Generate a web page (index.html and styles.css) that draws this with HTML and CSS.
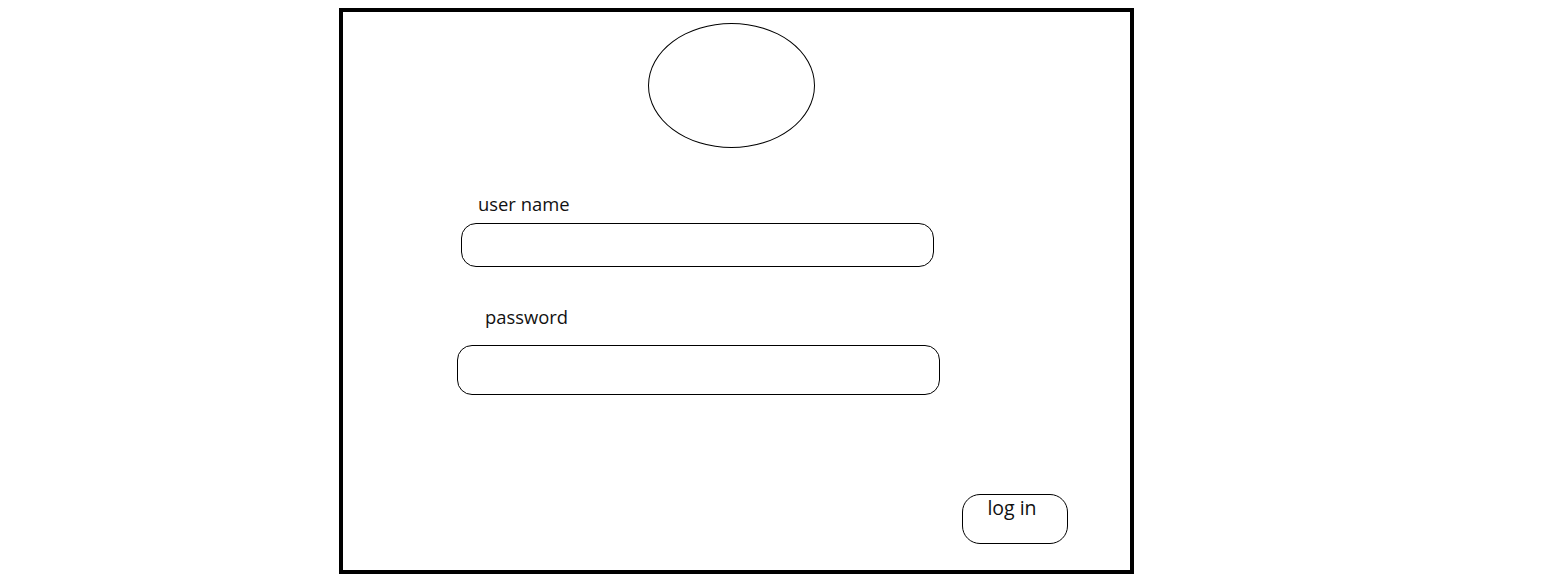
FILE: index.html
```html
<!DOCTYPE html>
<html>
<head>
<meta charset="utf-8">
<link rel="stylesheet" href="styles.css">
</head>
<body>
<div class="page">
  <div class="frame">
    <div class="logo"></div>
    <label class="label label-user">user name</label>
    <div class="field field-user"></div>
    <label class="label label-pass">password</label>
    <div class="field field-pass"></div>
    <div class="login">log in</div>
  </div>
</div>
</body>
</html>
```
FILE: styles.css
```css
html, body {
  margin: 0;
  background: #fff;
  font-family: "Open Sans", "Noto Sans", sans-serif;
  color: #111;
}
.page {
  padding: 8px 0 0 339px;
}
.frame {
  box-sizing: border-box;
  width: 795px;
  height: 566px;
  border: 4px solid #000;
  display: flex;
  flex-direction: column;
  align-items: flex-start;
}
.logo {
  box-sizing: border-box;
  width: 167px;
  height: 125px;
  margin: 11px 0 0 305px;
  border: 1px solid #000;
  border-radius: 50%;
}
.label {
  display: block;
  font-size: 18.4px;
  line-height: 24px;
}
.label-user {
  margin: 44px 0 0 135px;
}
.field {
  box-sizing: border-box;
  border: 1px solid #000;
  border-radius: 15px;
}
.field-user {
  width: 473px;
  height: 44px;
  margin: 7px 0 0 118px;
}
.label-pass {
  margin: 38px 0 0 142px;
}
.field-pass {
  width: 483px;
  height: 50px;
  margin: 16px 0 0 114px;
}
.login {
  box-sizing: border-box;
  width: 106px;
  height: 50px;
  margin: 99px 0 0 619px;
  border: 1px solid #000;
  border-radius: 18px;
  font-size: 19.5px;
  line-height: 24px;
  text-align: center;
  padding: 1px 6px 0 0;
}
```
